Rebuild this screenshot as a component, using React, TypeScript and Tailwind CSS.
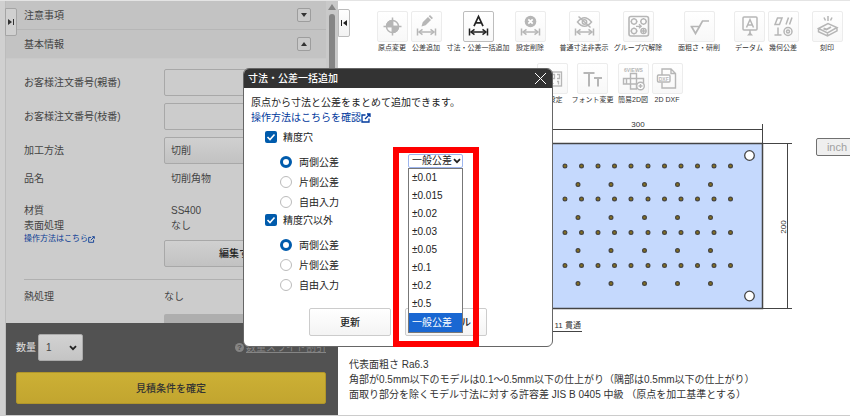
import type { ReactNode } from "react";

const G = "#b6b6b6";

function Dimension({ color = G }: { color?: string }) {
  return (
    <g fill="none" stroke={color} strokeWidth="1.5">
      <path d="M6.5 17.5v7M24.5 17.5v7M8 21h15" />
      <path d="M11.5 18.3 8 21l3.5 2.7M19.5 18.3 23 21l-3.5 2.7" />
    </g>
  );
}

const icons: Record<string, ReactNode> = {
  origin: (
    <g stroke={G} strokeWidth="1.5" fill="none">
      <circle cx="15.5" cy="15.5" r="6" />
      <path d="M15.5 6.500v18M6.500 15.500h18" />
      <path d="M15.500 15.500v-6a6 6 0 0 0-6 6zM15.500 15.500v6a6 6 0 0 0 6-6z" fill={G} />
    </g>
  ),
  pencil: (
    <g>
      <Dimension />
      <path d="m10.500 15.500 1.200-4.200 5.300-5.300 3 3-5.300 5.300zM17.700 5.300l1.300-1.300 3 3-1.300 1.300z" fill={G} />
    </g>
  ),
  batch: (
    <g>
      <Dimension color="#222" />
      <path d="M11 15.200 15.500 5.500l4.500 9.700M12.700 11.800h5.600" fill="none" stroke="#222" strokeWidth="1.700" />
    </g>
  ),
  remove: (
    <g>
      <Dimension />
      <circle cx="15.500" cy="10.500" r="5.800" fill={G} />
      <path d="m13.300 8.300 4.400 4.400m0-4.400-4.400 4.400" stroke="#fff" strokeWidth="1.700" />
    </g>
  ),
  hide: (
    <g>
      <Dimension />
      <g fill="none" stroke={G} strokeWidth="1.500">
        <path d="M8.500 11q7-8.500 14 0-7 8.500-14 0z" />
        <circle cx="15.500" cy="11" r="2.200" />
        <path d="m9.500 5.500 12 11" />
      </g>
    </g>
  ),
  group: (
    <g fill="none" stroke={G} strokeWidth="1.300">
      <rect x="6" y="5.500" width="19.500" height="19.500" rx="2" strokeWidth="1.600" />
      <circle cx="11" cy="10.500" r="2.600" />
      <circle cx="20.500" cy="10.500" r="2.600" />
      <circle cx="11" cy="20" r="2.600" />
      <circle cx="20.500" cy="20" r="2.600" />
      <path d="M11 7v1M11 13v1M7.500 10.500h1M13.500 10.500h1M20.500 7v1M20.500 13v1M17 10.500h1M23 10.500h1M11 16.500v1M11 22.500v1M7.500 20h1M13.500 20h1M20.500 17v6M17.500 20h6" />
      <path d="M13 15.300h5M16 13.300l2.200 2-2.200 2" />
    </g>
  ),
  rough: <path d="M6.500 15.500h9L11.500 22.500 7.500 15.500M11.500 22.500l7-12.500H25" fill="none" stroke={G} strokeWidth="1.700" />,
  datum: (
    <g fill="none" stroke={G} strokeWidth="1.500">
      <rect x="9" y="6" width="14" height="13" rx="1" />
      <path d="m12.500 16.500 3.500-8 3.500 8M13.700 14h4.600M16 19v5" />
      <path d="M13 24.500h6L16 21z" fill={G} stroke="none" />
    </g>
  ),
  geometry: (
    <g fill="none" stroke={G} strokeWidth="1.500">
      <path d="M7 13.500 9.500 7H14l-2.500 6.500zM18 13.500l2.500-7M21.500 13.500l2.500-7M10 16.500V24M6.500 24h7" />
      <circle cx="20" cy="20.500" r="4" />
      <circle cx="20" cy="20.500" r="1.500" />
    </g>
  ),
  stamp: (
    <g fill="none" stroke={G} strokeWidth="1.500">
      <path d="M6.500 17.500 16 12.500l9 4-9.500 5.500zM6.500 17.500v3.200l9 4.300 9.500-5.200v-3.300M15.500 22v3" />
      <path d="m11.500 17.500 3 1 4.500-2.500" strokeWidth="2" />
      <path d="M16 5v5M12 6.500l1.500 3M20 6.500l-1.500 3" />
    </g>
  ),
  decimals: (
    <g fill="none" stroke={G} strokeWidth="1.300">
      <rect x="6.500" y="9" width="18" height="14" />
      <path d="M9 11.500h3v4H9M15 11.500h2.500v4H15M20 11.500h2.500v4H20M11 18v3M16 20v1M20 18.500h1.500v3" />
    </g>
  ),
  font: <path d="M6.500 10h11M12 10v13.500M17 15h8M21 15v8.500" fill="none" stroke={G} strokeWidth="2" />,
  views: (
    <g fill="none" stroke={G} strokeWidth="1.400">
      <text x="15.500" y="8.500" fontSize="5" textAnchor="middle" fill={G} stroke="none" fontWeight="bold">
        6VIEWS
      </text>
      <path d="M12.500 10.500h6v5h7v5.500h-7V26h-6v-5H5.500v-5.500h7zM12.500 15.500h6v5.500h-6zM8.500 15.500V21" />
      <circle cx="22.500" cy="23" r="3.800" fill="#fff" />
      <path d="M20.500 23h4M22.500 21v4" />
    </g>
  ),
  dxf: (
    <g fill="none" stroke={G} strokeWidth="1.400">
      <path d="M10 12V6h9l4.500 4.500V25H10v-5.500M19 6v4.500h4.500" />
      <rect x="5.500" y="12" width="12.500" height="7" rx="1" fill="#fff" />
      <text x="11.700" y="17.500" fontSize="5" textAnchor="middle" fill={G} stroke="none" fontWeight="bold">
        DXF
      </text>
    </g>
  ),
};

function Tool({ icon, label, width = "w-[34px]", active = false }: { icon: string; label: string; width?: string; active?: boolean }) {
  return (
    <button type="button" className={`flex shrink-0 flex-col items-center ${width}`}>
      <span
        className={`block size-[31px] rounded-xs border bg-gradient-to-b from-white to-[#f8f8f8] ${
          active ? "border-[#bdbdbd]" : "border-[#ececec]"
        }`}
      >
        <svg viewBox="0 0 31 31" className="-m-px size-[31px]" aria-hidden="true">
          {icons[icon]}
        </svg>
      </span>
      <span className="text-[7px] leading-[11px] whitespace-nowrap text-[#333]">{label}</span>
    </button>
  );
}

function ExternalIcon({ className }: { className: string }) {
  return (
    <svg viewBox="0 0 10 10" className={className} fill="none" stroke="currentColor" strokeWidth="1.300" aria-hidden="true">
      <path d="M4.500 2H1v7h7V5.500M6 1h3v3M9 1 4 6" />
    </svg>
  );
}

function Chevron({ className }: { className: string }) {
  return (
    <svg viewBox="0 0 8 6" className={className} fill="none" stroke="#222" strokeWidth="1.800" aria-hidden="true">
      <path d="m1 1.200 3 3 3-3" />
    </svg>
  );
}

function SectionHeader({ title, open }: { title: string; open: boolean }) {
  return (
    <h2 className="flex h-[29px] shrink-0 items-center justify-between border-b border-[#b6b6b6] bg-[#c3c3c3] pr-[15px] pl-[18px] last-of-type:border-[#c9c9c9]">
      <span>{title}</span>
      <button
        type="button"
        aria-label={title}
        className="flex size-[14px] items-center justify-center rounded-xs border border-[#9d9d9d] bg-[#cacaca]"
      >
        <svg viewBox="0 0 6 4" className="h-1 w-[6px]" fill="#333" aria-hidden="true">
          {open ? <path d="M0 4h6L3 0z" /> : <path d="M0 0h6L3 4z" />}
        </svg>
      </button>
    </h2>
  );
}

const fieldBox = "h-[27px] min-w-0 flex-1 rounded-xs border border-[#a8a8a8]";

function Sidebar() {
  return (
    <aside className="relative ml-[5px] flex w-[333px] shrink-0 flex-col border-l border-[#bcbcbc] bg-[#ccc] text-[#444]">
      <button
        type="button"
        aria-label="パネルを開く"
        className="absolute top-[7px] -left-px flex h-7 w-3 items-center justify-center rounded-r-xs border border-[#a5a5a5] bg-[#d0d0d0]"
      >
        <svg viewBox="0 0 6 6" className="size-[6px]" fill="#333" aria-hidden="true">
          <path d="M0 0v6l4-3zM5 0h1v6H5z" />
        </svg>
      </button>
      <div className="flex min-h-0 flex-1">
        <div className="flex min-w-0 flex-1 flex-col overflow-hidden">
          <SectionHeader title="注意事項" open={false} />
          <SectionHeader title="基本情報" open />
          <div className="mr-3 ml-[18px] flex flex-col pt-[10px]">
            <div className="flex flex-col gap-[7px]">
              <div className="flex items-center">
                <label htmlFor="order-main" className="w-[140px]">お客様注文番号(親番)</label>
                <input id="order-main" className={fieldBox} />
              </div>
              <div className="flex items-center">
                <label htmlFor="order-sub" className="w-[140px]">お客様注文番号(枝番)</label>
                <input id="order-sub" className={fieldBox} />
              </div>
              <div className="flex items-center">
                <label htmlFor="method" className="w-[140px]">加工方法</label>
                <select id="method" className={`${fieldBox} appearance-none bg-gradient-to-b from-[#d0d0d0] to-[#c2c2c2] px-[6px]`}>
                  <option>切削</option>
                </select>
              </div>
            </div>
            <div className="mt-[7px] flex">
              <span className="w-[147px]">品名</span>
              <span>切削角物</span>
            </div>
            <div className="mt-[17px] flex border-b border-[#b0b0b0] pb-3">
              <div className="flex w-[140px] flex-col">
                <span>材質</span>
                <span>表面処理</span>
                <a href="#guide" className="flex items-center text-[8px] leading-3 text-[#0a3a94]">
                  操作方法はこちら
                  <ExternalIcon className="size-[7px]" />
                </a>
              </div>
              <div className="flex flex-1 flex-col">
                <span className="pl-[7px]">SS400</span>
                <span className="pl-[7px]">なし</span>
                <button
                  type="button"
                  className="mt-[7px] h-[27px] rounded-xs border border-[#a8a8a8] bg-gradient-to-b from-[#d0d0d0] to-[#c2c2c2] font-medium text-[#222]"
                >
                  編集する
                </button>
              </div>
            </div>
            <div className="mt-[9px] flex">
              <span className="w-[140px]">熱処理</span>
              <span>なし</span>
            </div>
            <button type="button" aria-label="熱処理を編集" className="mt-[10px] ml-[140px] h-[27px] shrink-0 rounded-xs bg-[#aeaeae]" />
          </div>
        </div>
        <div className="flex w-3 shrink-0 flex-col items-center bg-[#c9c9c9] pt-[3px]">
          <svg viewBox="0 0 8 6" className="h-[6px] w-2 shrink-0" fill="#858585" aria-hidden="true">
            <path d="M0 6h8L4 0z" />
          </svg>
          <div className="mt-1 h-[200px] w-[6px] rounded-full bg-[#858585]" />
        </div>
      </div>
      <footer className="flex shrink-0 flex-col gap-[11px] bg-[#525252] py-[11px] pr-3 pl-[10px]">
        <div className="flex items-center">
          <label htmlFor="quantity" className="w-[22px] text-[#e0e0e0]">数量</label>
          <div className="grid items-center">
            <select
              id="quantity"
              className="col-start-1 row-start-1 h-[27px] w-[45px] appearance-none rounded-xs border border-[#aaa] bg-gradient-to-b from-[#d2d2d2] to-[#c4c4c4] px-[7px]"
            >
              <option>1</option>
            </select>
            <Chevron className="pointer-events-none col-start-1 row-start-1 mr-[6px] h-[6px] w-2 justify-self-end" />
          </div>
          <a href="#discount" className="ml-auto flex items-center gap-[2px] text-[#858585]">
            <span className="flex size-[9px] items-center justify-center rounded-full bg-[#858585] text-[8px] font-bold text-[#525252]">?</span>
            <span className="underline">数量スライド割引</span>
          </a>
        </div>
        <button
          type="button"
          className="h-8 rounded-xs border border-[#b1962a] bg-gradient-to-b from-[#ccb035] to-[#c2a52f] font-medium text-[#333]"
        >
          見積条件を確定
        </button>
      </footer>
    </aside>
  );
}

const longRows = [51, 84, 117.5, 150.5];
const shortRows = [69.500, 102.500, 135.500, 168.500];
const longCols = [38, 55, 71.500, 88, 104.500, 121, 138, 154.500, 171, 187.500, 204, 220.500];
const shortCols = [35, 68, 101, 134.500, 167.500, 200.500];

function Drawing() {
  return (
    <svg viewBox="0 0 285 220" className="h-[220px] w-[285px] shrink-0" role="img" aria-label="加工図面" stroke="#444">
      <path d="M3 14.500h249M252.500 9v20M3.500 9v20M252 28.500h30M252 193.500h30M277.500 28v165" fill="none" />
      <rect x="3" y="28.500" width="249.500" height="165" fill="#c5d9fd" strokeWidth="1.500" />
      <g fill="#86701e" strokeWidth="1.200">
        {longRows.map((y) => longCols.map((x) => <circle key={`${x}-${y}`} cx={x} cy={y} r="1.900" />))}
        {shortRows.map((y) => shortCols.map((x) => <circle key={`${x}-${y}`} cx={x} cy={y} r="1.900" />))}
      </g>
      <g fill="#fff" strokeWidth="1.300">
        <circle cx="239.500" cy="40.500" r="4.800" />
        <circle cx="239.500" cy="181" r="4.800" />
      </g>
      <g fill="#333" stroke="none" fontSize="8" textAnchor="middle">
        <text x="128" y="12">300</text>
        <text transform="rotate(-90 275.500 111.500)" x="275" y="111.500">200</text>
        <text x="71" y="213" textAnchor="end">11 貫通</text>
      </g>
      <path d="M30 216.500h42" />
    </svg>
  );
}

function Workspace() {
  return (
    <main className="flex min-w-0 flex-1 overflow-hidden">
      <button
        type="button"
        aria-label="パネルを閉じる"
        className="mt-2 flex h-7 w-3 shrink-0 items-center justify-center rounded-r-xs border border-[#bbb] bg-gradient-to-b from-white to-[#f2f2f2]"
      >
        <svg viewBox="0 0 6 6" className="size-[6px]" fill="#222" aria-hidden="true">
          <path d="M6 0v6L2 3zM0 0h1v6H0z" />
        </svg>
      </button>
      <div className="min-w-0 flex-1">
        <div className="mt-[10px] ml-[25px] flex gap-[11px]">
          <div className="flex">
            <Tool icon="origin" label="原点変更" />
            <Tool icon="pencil" label="公差追加" />
            <Tool icon="batch" label="寸法・公差一括追加" width="w-[70px]" active />
            <Tool icon="remove" label="設定削除" />
          </div>
          <div className="flex">
            <Tool icon="hide" label="普通寸法非表示" width="w-[52px]" />
            <Tool icon="group" label="グループ穴解除" width="w-[56px]" />
          </div>
          <Tool icon="rough" label="面粗さ・研削" width="w-[44px]" />
          <div className="flex">
            <Tool icon="datum" label="データム" />
            <Tool icon="geometry" label="幾何公差" />
          </div>
          <Tool icon="stamp" label="刻印" width="w-8" />
        </div>
        <div className="mt-[10px] ml-[185px] flex">
          <Tool icon="decimals" label="桁設定" />
          <Tool icon="font" label="フォント変更" width="w-[47px]" />
          <Tool icon="views" label="簡易2D図" />
          <Tool icon="dxf" label="2D DXF" />
        </div>
        <div className="mt-[10px] ml-[160px] flex items-start gap-[21px]">
          <Drawing />
          <button
            type="button"
            className="mt-[23px] h-[18px] w-[42px] shrink-0 rounded-xs border border-[#707070] bg-[#efefef] text-[11px] text-[#a0a0a0]"
          >
            inch
          </button>
        </div>
        <div className="mt-[22px] -ml-px whitespace-nowrap text-[#333]">
          <p>代表面粗さ Ra6.3</p>
          <p>角部が0.5mm以下のモデルは0.1～0.5mm以下の仕上がり（隅部は0.5mm以下の仕上がり）</p>
          <p>面取り部分を除くモデル寸法に対する許容差 JIS B 0405 中級 （原点を加工基準とする）</p>
        </div>
      </div>
    </main>
  );
}

const tolerances = ["±0.01", "±0.015", "±0.02", "±0.03", "±0.05", "±0.1", "±0.2", "±0.5"];
const modes = ["両側公差", "片側公差", "自由入力"];

function ToleranceGroup({ name, title, children }: { name: string; title: string; children?: ReactNode }) {
  return (
    <fieldset className="pl-[14px]">
      <label className="flex h-4 items-center gap-[6px]">
        <span className="grid size-3">
          <input type="checkbox" defaultChecked className="col-start-1 row-start-1 size-3 appearance-none rounded-xs bg-[#005bac]" />
          <svg viewBox="0 0 12 12" className="pointer-events-none col-start-1 row-start-1 size-3" fill="none" stroke="#fff" strokeWidth="1.600" aria-hidden="true">
            <path d="m2.500 6 2.500 2.500 4.500-5" />
          </svg>
        </span>
        {title}
      </label>
      <div className="mt-[7px] flex">
        <div className="flex w-[143px] flex-col pl-[15px]">
          {modes.map((mode, i) => (
            <label key={mode} className="flex h-5 items-center gap-[7px]">
              <input
                type="radio"
                name={name}
                defaultChecked={i === 0}
                className="size-3 appearance-none rounded-full border border-[#bbb] bg-white checked:border-[3px] checked:border-[#005bac]"
              />
              {mode}
            </label>
          ))}
        </div>
        {children}
      </div>
    </fieldset>
  );
}

const dialogButton = "h-7 w-[82px] rounded-xs border border-[#ccc] bg-gradient-to-b from-white to-[#f4f4f4] font-medium";

function ToleranceDialog() {
  return (
    <section
      role="dialog"
      aria-labelledby="dialog-title"
      className="absolute top-[68px] left-[243px] w-[310px] rounded-md border border-[#666] bg-white text-[#222]"
    >
      <header className="flex h-[19px] items-center justify-between rounded-t-[5px] bg-[#333] pr-[6px] pl-1 text-white">
        <h1 id="dialog-title" className="font-medium">寸法・公差一括追加</h1>
        <button type="button" aria-label="閉じる">
          <svg viewBox="0 0 11 11" className="size-[11px]" stroke="#fff" aria-hidden="true">
            <path d="m0 0 11 11M11 0 0 11" />
          </svg>
        </button>
      </header>
      <div className="px-[7px] pt-[7px] pb-[10px]">
        <p>原点から寸法と公差をまとめて追加できます。</p>
        <a href="#help" className="flex w-fit items-center text-[#00389c]">
          操作方法はこちらを確認
          <ExternalIcon className="size-[10px]" />
        </a>
        <div className="mt-1 flex flex-col">
          <ToleranceGroup name="precision-hole" title="精度穴">
            <div className="relative mt-[2px] h-[14px] w-[55px]">
              <select
                aria-label="公差"
                className="block h-[14px] w-[55px] appearance-none rounded-xs border border-[#9db5ee] bg-white pl-[3px] leading-3"
              >
                <option>一般公差</option>
              </select>
              <Chevron className="pointer-events-none absolute top-1 right-[2px] h-[6px] w-2" />
              <ul role="listbox" className="absolute top-[14px] left-0 z-10 w-[55px] border border-[#777] bg-white">
                {tolerances.map((t) => (
                  <li key={t} role="option" aria-selected="false" className="h-[18px] pl-[3px] leading-[18px]">
                    {t}
                  </li>
                ))}
                <li role="option" aria-selected="true" className="h-[19px] bg-[#1967d2] pl-[3px] leading-[19px] text-white">
                  一般公差
                </li>
              </ul>
            </div>
          </ToleranceGroup>
          <ToleranceGroup name="other" title="精度穴以外" />
        </div>
        <div className="mt-[13px] flex justify-center gap-[14px]">
          <button type="button" className={dialogButton}>更新</button>
          <button type="button" className={dialogButton}>キャンセル</button>
        </div>
      </div>
      <div className="pointer-events-none absolute top-[78px] left-[149px] z-20 h-[200px] w-[86px] border-6 border-[#f00]" />
    </section>
  );
}

export default function App() {
  return (
    <div className="relative flex h-screen flex-col overflow-hidden bg-white pb-[2px] font-['Liberation_Sans','Noto_Sans_CJK_JP',sans-serif] text-[10px] leading-[15px]">
      <div className="flex min-h-0 flex-1 border-y border-t-[#e4e4e4] border-b-[#ccc] bg-[linear-gradient(to_right,#d0d0d0_5px,white_5px)]">
        <Sidebar />
        <Workspace />
      </div>
      <ToleranceDialog />
    </div>
  );
}
